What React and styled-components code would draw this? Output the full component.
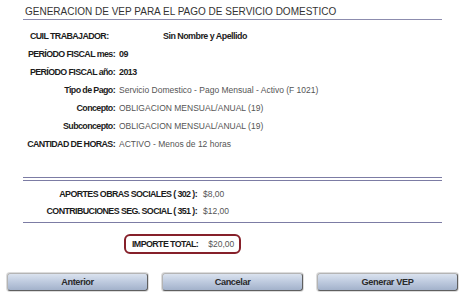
import React from 'react';
import styled, { createGlobalStyle } from 'styled-components';

const GlobalStyle = createGlobalStyle`
	body {
		margin: 0;
		background: #fff;
		font-family: "Liberation Sans", Arial, sans-serif;
	}
`;

const sans = `"Liberation Sans", Arial, sans-serif`;

const Page = styled.div`
	width: 460px;
	height: 297px;
	padding-top: 6px;
	box-sizing: border-box;
	overflow: hidden;
`;

const Title = styled.h1`
	margin: 0 18px 0 23px;
	padding: 0 0 1px 2px;
	font-family: ${sans};
	font-weight: normal;
	font-size: 10px;
	line-height: 12px;
	color: #333;
	border-bottom: 1px solid #8c8cae;
`;

const Section = styled.div`
	margin: ${props => props.top}px 18px 0 23px;
	display: flex;
	flex-direction: column;
`;

const Row = styled.div`
	display: flex;
	align-items: center;
	height: ${props => props.h}px;
	padding-left: ${props => props.indent || 0}px;
`;

const Label = styled.span`
	flex: none;
	width: ${props => (props.w ? `${props.w}px` : 'auto')};
	text-align: ${props => (props.left ? 'left' : 'right')};
	font-family: ${sans};
	font-weight: bold;
	font-size: 8.9px;
	letter-spacing: -0.6px;
	color: #1c1c1c;
	white-space: nowrap;
`;

const Value = styled.span`
	margin-left: ${props => props.gap}px;
	font-family: ${sans};
	font-weight: ${props => (props.strong ? 'bold' : 'normal')};
	font-size: ${props => (props.strong ? '8.9px' : '8.5px')};
	letter-spacing: ${props => (props.strong ? '-0.5px' : '0')};
	color: ${props => (props.strong ? '#1c1c1c' : '#555')};
	white-space: nowrap;
`;

const Rule = styled.div`
	margin: ${props => props.top}px 18px 0 23px;
	height: ${props => (props.double ? '2px' : '0')};
	border-top: 1px solid #7c7ca4;
	border-bottom: ${props => (props.double ? '1px solid #7c7ca4' : 'none')};
`;

const TotalBox = styled.div`
	align-self: flex-start;
	margin: 11px 0 0 101px;
	height: 20px;
	box-sizing: border-box;
	display: inline-flex;
	align-items: center;
	padding: 0 5px 0 6px;
	border: 2px solid #86202a;
	border-radius: 6px;
`;

const Buttons = styled.div`
	display: flex;
	gap: 14px;
	margin-top: 19px;
	padding-left: 7px;
`;

const Button = styled.button`
	width: 141px;
	height: 18px;
	padding: 0;
	box-sizing: border-box;
	border: 1px solid;
	border-color: #b4b4b4 #5f5f5f #5f5f5f #b4b4b4;
	border-radius: 3px;
	box-shadow: 0 0 0 1px #dcdcdc;
	background: linear-gradient(#dae2ee, #c0cce0 45%, #a3b2cb);
	font-family: ${sans};
	font-weight: bold;
	font-size: 9.2px;
	letter-spacing: -0.4px;
	color: #2a2a2a;
	cursor: pointer;
`;

const info = [
	{ label: 'CUIL TRABAJADOR:', value: 'Sin Nombre y Apellido', strong: true, cuil: true },
	{ label: 'PERÍODO FISCAL mes:', value: '09', strong: true },
	{ label: 'PERÍODO FISCAL año:', value: '2013', strong: true },
	{ label: 'Tipo de Pago:', value: 'Servicio Domestico - Pago Mensual - Activo (F 1021)' },
	{ label: 'Concepto:', value: 'OBLIGACION MENSUAL/ANUAL (19)' },
	{ label: 'Subconcepto:', value: 'OBLIGACION MENSUAL/ANUAL (19)' },
	{ label: 'CANTIDAD DE HORAS:', value: 'ACTIVO - Menos de 12 horas' },
];

const amounts = [
	{ label: 'APORTES OBRAS SOCIALES ( 302 ):', value: '$8,00' },
	{ label: 'CONTRIBUCIONES SEG. SOCIAL ( 351 ):', value: '$12,00' },
];

const App = () => (
	<Page>
		<GlobalStyle />
		<Title>GENERACION DE VEP PARA EL PAGO DE SERVICIO DOMESTICO</Title>

		<Section top={7}>
			{info.map(row =>
				row.cuil ? (
					<Row key={row.label} h={18} indent={7}>
						<Label w={133} left>{row.label}</Label>
						<Value gap={0} strong>{row.value}</Value>
					</Row>
				) : (
					<Row key={row.label} h={18}>
						<Label w={92}>{row.label}</Label>
						<Value gap={4} strong={row.strong}>{row.value}</Value>
					</Row>
				)
			)}
		</Section>

		<Rule top={24} double />

		<Section top={4}>
			{amounts.map(row => (
				<Row key={row.label} h={17}>
					<Label w={174}>{row.label}</Label>
					<Value gap={6}>{row.value}</Value>
				</Row>
			))}
		</Section>

		<Rule top={3} />

		<Section top={0}>
			<TotalBox>
				<Label>IMPORTE TOTAL:</Label>
				<Value gap={10}>$20,00</Value>
			</TotalBox>
		</Section>

		<Buttons>
			<Button>Anterior</Button>
			<Button>Cancelar</Button>
			<Button>Generar VEP</Button>
		</Buttons>
	</Page>
);

export default App;
